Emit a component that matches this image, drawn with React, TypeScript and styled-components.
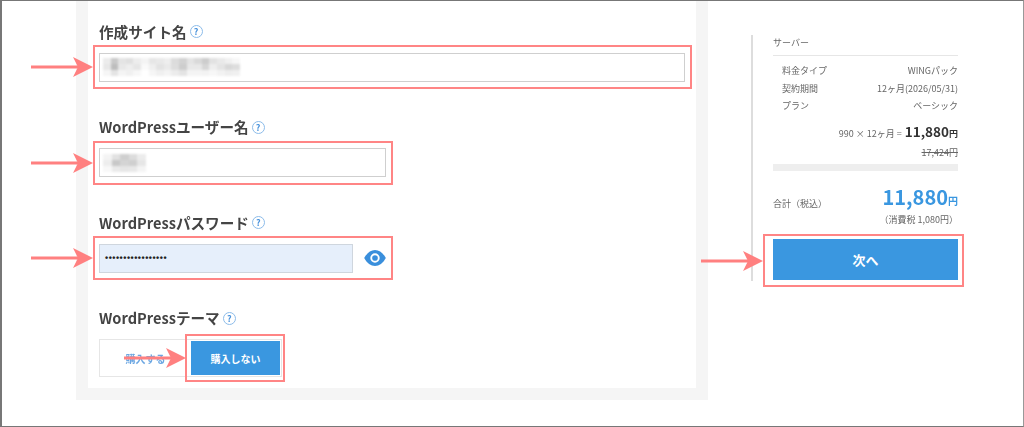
import React from "react";
import styled, { createGlobalStyle } from "styled-components";

const GlobalStyle = createGlobalStyle`
  * { box-sizing: border-box; }
  html, body { margin: 0; padding: 0; background: #fff; }
  body { font-family: "Noto Sans CJK JP", "Noto Sans", sans-serif; color: #444; }
`;

const Page = styled.div`
  width: 1024px;
  height: 427px;
  display: flex;
  align-items: flex-start;
  padding-left: 74px;
  overflow: hidden;
  border-top: 1px solid #777;
  border-right: 1px solid #999;
  border-bottom: 1px solid #777;
  border-left: 2px solid #777;
  filter: blur(0.35px);
`;

const Panel = styled.div`
  width: 632px;
  height: 399px;
  flex-shrink: 0;
  padding: 0 12px 12px;
  background: #f5f5f5;
`;

const Form = styled.div`
  height: 100%;
  padding: 19.5px 4px 0 5px;
  background: #fff;
  display: flex;
  flex-direction: column;
  gap: 27px;
`;

const Field = styled.div`
  display: flex;
  flex-direction: column;
  gap: 2.5px;
`;

const Label = styled.div`
  display: flex;
  align-items: center;
  gap: 3px;
  height: 22px;
  padding-left: 6px;
  font-size: 14.6px;
  line-height: 22px;
  font-weight: 700;
  color: #444;
`;

const Help = styled.span`
  width: 13px;
  height: 13px;
  border: 1px solid #8cbcea;
  border-radius: 50%;
  color: #4a93dc;
  font-size: 9px;
  line-height: 11px;
  font-weight: 700;
  text-align: center;
`;

const Highlight = styled.div<{ $width: number }>`
  position: relative;
  width: ${(p) => p.$width}px;
  height: 44px;
  padding: 6px 5px 6px 4px;
  border: 2px solid #ff8585;
  display: flex;
  align-items: center;
`;

const ArrowMark = styled.svg<{ $right: number }>`
  position: absolute;
  top: 50%;
  right: ${(p) => p.$right}px;
  width: 62px;
  height: 22px;
  margin-top: -11px;
`;

const TextBox = styled.div<{ $filled?: boolean }>`
  position: relative;
  flex: 1;
  height: 29px;
  display: flex;
  align-items: center;
  padding-left: ${(p) => (p.$filled ? 5 : 3)}px;
  background: ${(p) => (p.$filled ? "#e6effb" : "#fff")};
  border: 1px solid ${(p) => (p.$filled ? "#cfd6de" : "#cfcfcf")};
`;

const Mosaic = styled.div<{ $cols: number; $cell: number }>`
  display: grid;
  grid-template-columns: repeat(${(p) => p.$cols}, ${(p) => p.$cell}px);
  grid-auto-rows: 6px;
  filter: blur(1px);
`;

const MosaicCell = styled.span<{ $tone: string }>`
  background: ${(p) => p.$tone};
`;

const Dots = styled.span`
  font-family: "Liberation Sans", sans-serif;
  font-size: 9px;
  font-weight: 700;
  letter-spacing: 0.5px;
  color: #222;
`;

const EyeIcon = styled.svg`
  width: 22px;
  height: 16px;
  margin-left: 11px;
  flex-shrink: 0;
`;

const ToggleRow = styled.div`
  display: flex;
  align-items: center;
  height: 50px;
  padding-top: 3px;
  margin-left: 6px;
`;

const ToggleGroup = styled.div`
  width: 183px;
  height: 38px;
  display: flex;
  align-items: center;
  border: 1px solid #e6e6e6;
`;

const OffOption = styled.div`
  width: 91px;
  text-align: center;
  font-size: 10px;
  font-weight: 700;
  color: #6aa6e2;
`;

const OnOption = styled.div`
  position: relative;
  width: 89px;
  height: 34px;
  background: #3a97e0;
  color: #fff;
  font-size: 10px;
  font-weight: 700;
  display: flex;
  align-items: center;
  justify-content: center;
`;

const OptionFrame = styled.div`
  position: absolute;
  inset: -7px -5px -7px -6px;
  border: 2px solid #ff8585;
`;

const Side = styled.div`
  width: 207px;
  height: 246px;
  flex-shrink: 0;
  margin: 34px 0 0 43px;
  padding-left: 20px;
  border-left: 2px solid #ddd;
  display: flex;
  flex-direction: column;
`;

const SideTitle = styled.div`
  height: 21px;
  padding-bottom: 6px;
  border-bottom: 1px solid #e6e6e6;
  font-size: 9px;
  line-height: 16px;
  color: #666;
`;

const Rows = styled.div`
  padding: 6px 0 0 9px;
  display: flex;
  flex-direction: column;
`;

const Row = styled.div`
  display: flex;
  justify-content: space-between;
  height: 17.5px;
  font-size: 9px;
  line-height: 17px;
  color: #666;
`;

const Calc = styled.div`
  display: flex;
  justify-content: flex-end;
  align-items: baseline;
  gap: 3px;
  height: 24px;
  margin-top: 4px;
  font-size: 9px;
  line-height: 24px;
  color: #666;
`;

const CalcTotal = styled.strong`
  font-size: 13.5px;
  font-weight: 700;
  color: #333;
`;

const Yen = styled.span`
  font-size: 9px;
  font-weight: 700;
`;

const OldPrice = styled.div`
  height: 18px;
  margin-top: 1.5px;
  text-align: right;
  font-size: 9px;
  line-height: 18px;
  color: #666;
  text-decoration: line-through;
`;

const ThickRule = styled.div`
  height: 7px;
  margin-top: 2px;
  background: #eee;
  flex-shrink: 0;
`;

const TotalRow = styled.div`
  display: flex;
  justify-content: space-between;
  align-items: flex-end;
  height: 36px;
  margin-top: 6px;
  flex-shrink: 0;
`;

const TotalLabel = styled.span`
  font-size: 9px;
  line-height: 14px;
  margin-bottom: 2px;
  color: #666;
`;

const TotalAmount = styled.span`
  font-size: 20px;
  line-height: 28px;
  margin-bottom: -2px;
  font-weight: 700;
  color: #3a97e0;
`;

const TotalYen = styled.span`
  font-size: 10px;
`;

const Tax = styled.div`
  height: 14px;
  text-align: right;
  font-size: 9px;
  line-height: 14px;
  color: #666;
  flex-shrink: 0;
`;

const NextButton = styled.div`
  position: relative;
  height: 41px;
  margin-top: 12px;
  flex-shrink: 0;
  background: #3a97e0;
  color: #fff;
  font-size: 13px;
  font-weight: 700;
  display: flex;
  align-items: center;
  justify-content: center;
`;

const NextFrame = styled.div`
  position: absolute;
  inset: -5px -6px -7px -10px;
  border: 2px solid #ff8585;
`;

const Arrow = ({ right }: { right: number }) => (
  <ArrowMark $right={right} viewBox="0 0 62 22">
    <path d="M0 9.5h47v3H0z" fill="#ff8080" />
    <path d="M42 1l20 10-20 10 5-10z" fill="#ff8080" />
  </ArrowMark>
);

const siteNameTones = [
  ["#ececec", "#c9c9c9", "#e4e4e4", "#e0e0e0", "#ededed", "#f4f4f4", "#e6e6e6", "#e9e9e9", "#eee", "#dcdcdc", "#d2d2d2", "#e4e4e4", "#d9d9d9", "#ccc", "#e2e2e2", "#e9e9e9", "#f0f0f0", "#f7f7f7"],
  ["#e8e8e8", "#bdbdbd", "#e8e8e8", "#eee", "#e6e6e6", "#fafafa", "#efefef", "#e3e3e3", "#eaeaea", "#ddd", "#cdcdcd", "#e8e8e8", "#e8e8e8", "#d6d6d6", "#eee", "#e4e4e4", "#d8d8d8", "#ddd"],
  ["#f6f6f6", "#e4e4e4", "#f4f4f4", "#f0f0f0", "#f7f7f7", "#fff", "#f6f6f6", "#f0f0f0", "#f4f4f4", "#ececec", "#e4e4e4", "#f4f4f4", "#f4f4f4", "#f3f3f3", "#f7f7f7", "#f2f2f2", "#eee", "#f0f0f0"],
];

const userNameTones = [
  ["#f4f4f4", "#e2e2e2", "#cfcfcf", "#dcdcdc", "#ececec"],
  ["#ededed", "#c8c8c8", "#d4d4d4", "#cfcfcf", "#e6e6e6"],
  ["#f8f8f8", "#eaeaea", "#e6e6e6", "#e8e8e8", "#f4f4f4"],
];

const BlurredText = ({ tones, cell }: { tones: string[][]; cell: number }) => (
  <Mosaic $cols={tones[0].length} $cell={cell}>
    {tones.flat().map((tone, i) => (
      <MosaicCell key={i} $tone={tone} />
    ))}
  </Mosaic>
);

const App = () => {
  return (
    <Page>
      <GlobalStyle />
      <Panel>
        <Form>
          <Field>
            <Label>
              作成サイト名<Help>?</Help>
            </Label>
            <Highlight $width={599}>
              <Arrow right={597} />
              <TextBox>
                <BlurredText tones={siteNameTones} cell={7.6} />
              </TextBox>
            </Highlight>
          </Field>
          <Field>
            <Label>
              WordPressユーザー名<Help>?</Help>
            </Label>
            <Highlight $width={300}>
              <Arrow right={298} />
              <TextBox>
                <BlurredText tones={userNameTones} cell={8.5} />
              </TextBox>
            </Highlight>
          </Field>
          <Field>
            <Label>
              WordPressパスワード<Help>?</Help>
            </Label>
            <Highlight $width={300}>
              <Arrow right={298} />
              <TextBox $filled>
                <Dots>•••••••••••••••••</Dots>
              </TextBox>
              <EyeIcon viewBox="0 0 23 17">
                <path
                  d="M0 8.5C3 3 7 0 11.5 0S20 3 23 8.5C20 14 16 17 11.5 17S3 14 0 8.5z"
                  fill="#3a8fdc"
                />
                <circle cx="11.5" cy="8.5" r="4" fill="none" stroke="#fff" strokeWidth="2" />
              </EyeIcon>
            </Highlight>
          </Field>
          <Field>
            <Label>
              WordPressテーマ<Help>?</Help>
            </Label>
            <ToggleRow>
              <ToggleGroup>
                <OffOption>購入する</OffOption>
                <OnOption>
                  購入しない
                  <OptionFrame>
                    <Arrow right={97} />
                  </OptionFrame>
                </OnOption>
              </ToggleGroup>
            </ToggleRow>
          </Field>
        </Form>
      </Panel>
      <Side>
        <SideTitle>サーバー</SideTitle>
        <Rows>
          <Row>
            <span>料金タイプ</span>
            <span>WINGパック</span>
          </Row>
          <Row>
            <span>契約期間</span>
            <span>12ヶ月(2026/05/31)</span>
          </Row>
          <Row>
            <span>プラン</span>
            <span>ベーシック</span>
          </Row>
        </Rows>
        <Calc>
          990 × 12ヶ月 =
          <CalcTotal>
            11,880<Yen>円</Yen>
          </CalcTotal>
        </Calc>
        <OldPrice>17,424円</OldPrice>
        <ThickRule />
        <TotalRow>
          <TotalLabel>合計（税込）</TotalLabel>
          <TotalAmount>
            11,880<TotalYen>円</TotalYen>
          </TotalAmount>
        </TotalRow>
        <Tax>（消費税 1,080円）</Tax>
        <NextButton>
          次へ
          <NextFrame>
            <Arrow right={199} />
          </NextFrame>
        </NextButton>
      </Side>
    </Page>
  );
};

export default App;
